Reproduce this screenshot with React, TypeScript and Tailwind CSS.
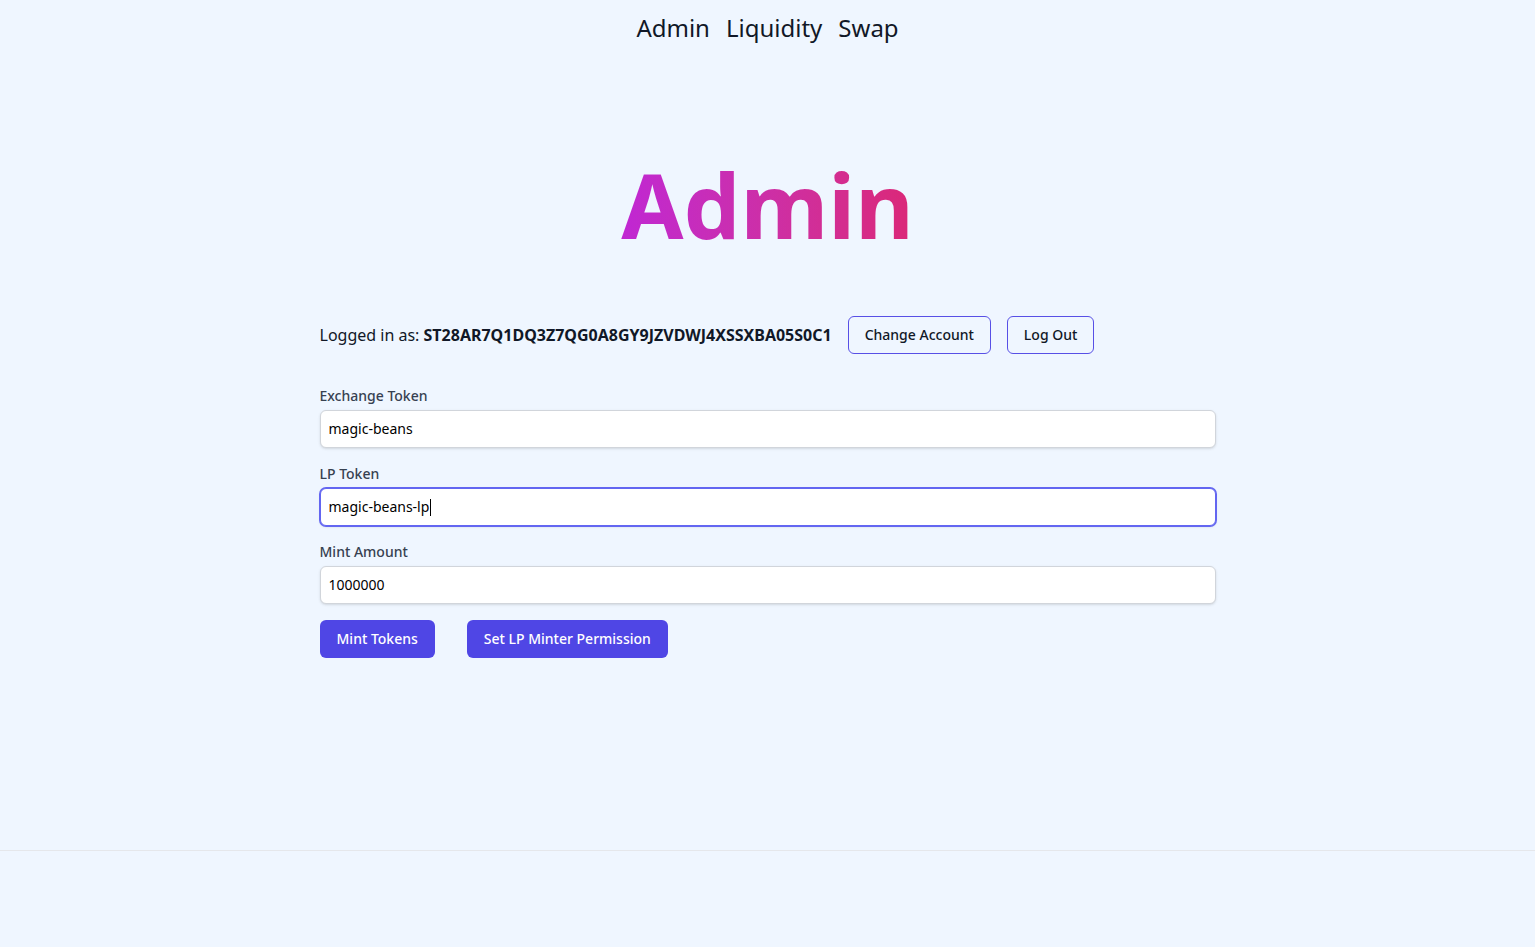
import React from 'react';

const font = { fontFamily: '"Noto Sans", "Open Sans", sans-serif' };

function Field({ label, value, focused }: { label: string; value: string; focused?: boolean }) {
	return (
		<label className="block mt-4 first:mt-0">
			<span className="block text-sm font-medium text-[#374151]">{label}</span>
			<div
				className={
					focused
						? 'mt-1 flex items-center h-[38px] w-full rounded-md border border-[#6366f1] ring-1 ring-[#6366f1] bg-white px-2 text-sm text-black shadow-sm'
						: 'mt-1 flex items-center h-[38px] w-full rounded-md border border-[#d1d5db] bg-white px-2 text-sm text-black shadow-sm'
				}
			>
				<span>{value}</span>
				{focused && <span className="ml-px inline-block w-px h-[17px] bg-black" />}
			</div>
		</label>
	);
}

export default function App() {
	return (
		<div className="min-h-screen flex flex-col bg-[#eff6ff] text-[#111827]" style={font}>
			<nav className="flex justify-center gap-4 pt-3 text-2xl">
				<a href="#admin">Admin</a>
				<a href="#liquidity">Liquidity</a>
				<a href="#swap">Swap</a>
			</nav>

			<main className="flex-1">
				<div className="text-center mt-[115px]">
					<h1 className="inline-block text-[90px] font-bold leading-none bg-linear-to-r from-[#c026d3] to-[#db2777] bg-clip-text text-transparent">
						Admin
					</h1>
				</div>

				<div className="max-w-4xl mx-auto mt-[67px]">
					<div className="flex items-center">
						<span>
							Logged in as: <b className="font-bold">ST28AR7Q1DQ3Z7QG0A8GY9JZVDWJ4XSSXBA05S0C1</b>
						</span>
						<button className="ml-4 rounded-md border border-[#5850e6] px-4 py-2 text-sm font-medium">
							Change Account
						</button>
						<button className="ml-4 rounded-md border border-[#5850e6] px-4 py-2 text-sm font-medium">
							Log Out
						</button>
					</div>

					<div className="mt-8">
						<Field label="Exchange Token" value="magic-beans" />
						<Field label="LP Token" value="magic-beans-lp" focused />
						<Field label="Mint Amount" value="1000000" />
					</div>

					<div className="mt-4 flex">
						<button className="rounded-md border border-transparent bg-[#4f46e5] px-4 py-2 text-sm font-medium text-white">
							Mint Tokens
						</button>
						<button className="ml-8 rounded-md border border-transparent bg-[#4f46e5] px-4 py-2 text-sm font-medium text-white">
							Set LP Minter Permission
						</button>
					</div>
				</div>
			</main>

			<footer className="h-[97px] border-t border-[#e5e7eb]" />
		</div>
	);
}
